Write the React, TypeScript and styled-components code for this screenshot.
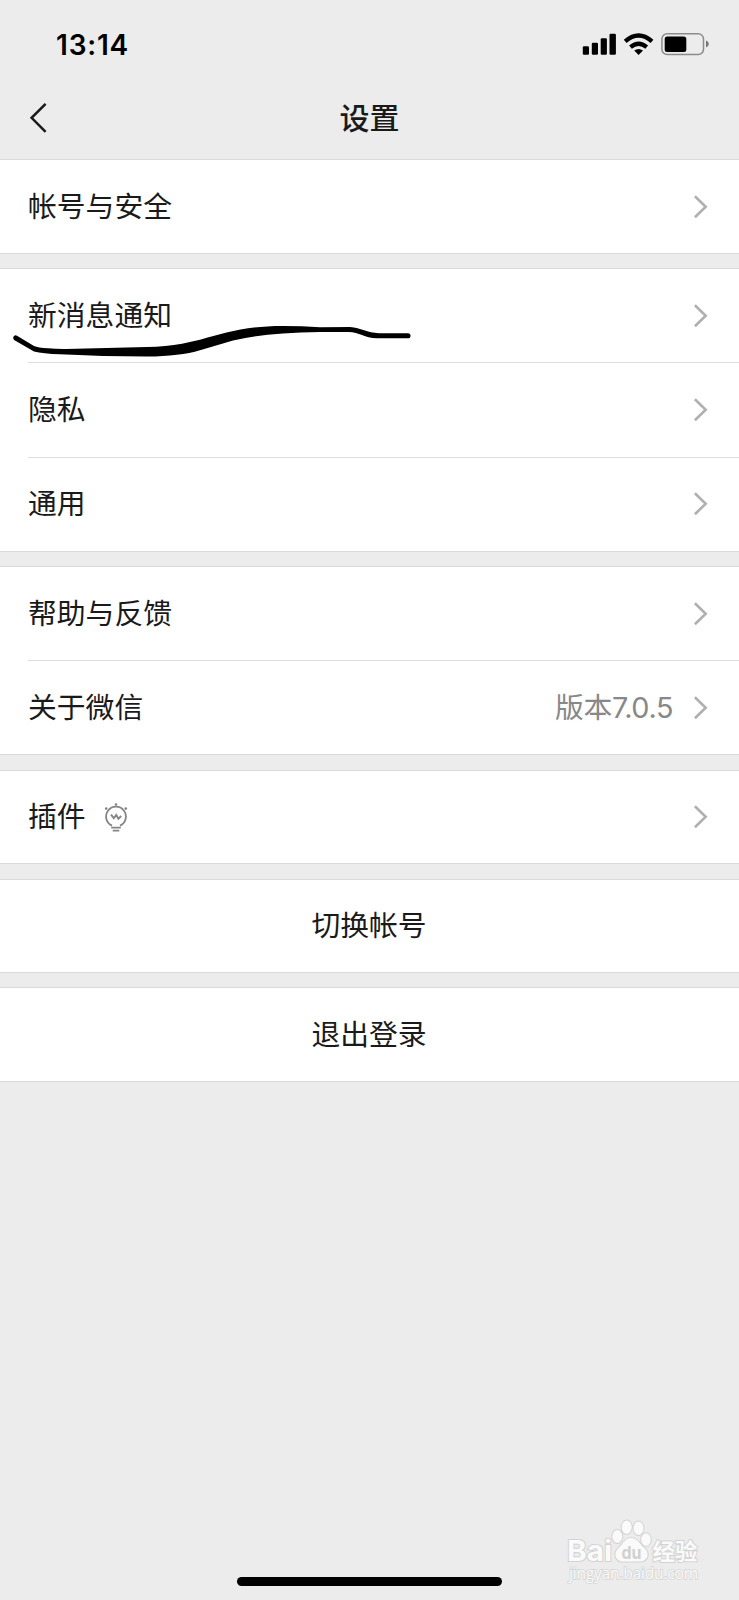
import React from 'react';
import styled, { createGlobalStyle } from 'styled-components';

const GlobalStyle = createGlobalStyle`
  * { box-sizing: border-box; }
  html, body { margin: 0; background: #ececec; }
`;

const Screen = styled.main`
  position: relative;
  width: 739px;
  height: 1600px;
  overflow: hidden;
  display: flex;
  flex-direction: column;
  background: #ececec;
  color: #1a1a1a;
  font-family: Inter, 'Noto Sans CJK SC', sans-serif;
`;

const StatusBar = styled.div`
  height: 88px;
  flex: none;
  display: flex;
  justify-content: space-between;
  padding-right: 29px;
`;

const Time = styled.span`
  padding: 28px 0 0 56px;
  font: 600 28px/34px Inter, sans-serif;
  letter-spacing: 0.8px;
  color: #000;
`;

const StatusIcons = styled.svg`
  width: 130px;
  height: 28px;
  margin-top: 30px;
`;

const NavBar = styled.header`
  height: 71px;
  flex: none;
  display: grid;
  grid-template-columns: 100px 1fr 100px;
`;

const BackIcon = styled.svg`
  width: 24px;
  height: 36px;
  margin: 12px 0 0 26px;
`;

const Title = styled.h1`
  margin: 6px 0 0;
  text-align: center;
  font: 500 30px/44px 'Noto Sans CJK SC', sans-serif;
`;

const Group = styled.section<{ $height: number; $gap: number }>`
  position: relative;
  flex: none;
  display: flex;
  flex-direction: column;
  height: ${(p) => p.$height}px;
  margin-bottom: ${(p) => p.$gap}px;
  background: #fff;
  border-top: 1px solid #dadada;
  border-bottom: 1px solid #dadada;
`;

const Row = styled.div<{ $center?: boolean }>`
  flex: 1;
  display: flex;
  align-items: center;
  justify-content: ${(p) => (p.$center ? 'center' : 'flex-start')};
  margin-left: ${(p) => (p.$center ? 0 : 28)}px;
  padding-right: ${(p) => (p.$center ? 1 : 30)}px;
  & + & { border-top: 1px solid #dedede; }
`;

const Label = styled.span`
  font-size: 28.8px;
  line-height: 42px;
  white-space: nowrap;
`;

const Value = styled.span`
  margin-left: auto;
  margin-right: 20px;
  font-size: 28.8px;
  line-height: 42px;
  letter-spacing: -0.4px;
  color: #888;
`;

const ChevronIcon = styled.svg<{ $push: boolean }>`
  width: 16px;
  height: 24px;
  flex: none;
  margin-left: ${(p) => (p.$push ? 'auto' : '0')};
`;

const BulbIcon = styled.svg`
  width: 26px;
  height: 30px;
  margin: 1px 0 0 17px;
`;

const Underline = styled.svg`
  position: absolute;
  left: 0;
  top: 51px;
  width: 420px;
  height: 40px;
`;

const HomeIndicator = styled.div`
  position: absolute;
  left: 237px;
  top: 1577px;
  width: 265px;
  height: 9px;
  border-radius: 5px;
  background: #000;
`;

const Watermark = styled.svg`
  position: absolute;
  left: 560px;
  top: 1514px;
  width: 150px;
  height: 74px;
`;

function Chevron({ push = true }: { push?: boolean }) {
  return (
    <ChevronIcon $push={push} viewBox="0 0 16 24" fill="none" stroke="#b0b0b0" strokeWidth="2.6">
      <path d="M1.9 1.2 12.7 11.7 1.9 22.2" />
    </ChevronIcon>
  );
}

function Item({ label, value, icon }: { label: string; value?: string; icon?: React.ReactNode }) {
  return (
    <Row>
      <Label>{label}</Label>
      {icon}
      {value && <Value>{value}</Value>}
      <Chevron push={!value} />
    </Row>
  );
}

function Bulb() {
  return (
    <BulbIcon viewBox="0 0 26 30" fill="none" stroke="#858585" strokeWidth="1.8">
      <path d="M9 22.6A9.9 9.9 0 1 1 17 22.6M8.2 24.6H17.8M9.7 27.6H16.3" />
      <path d="M8 11.6 10.8 15.2 13.2 12 15.4 15.8 18.2 13" strokeWidth="1.9" />
      <g fill="#858585" stroke="none">
        <circle cx="13" cy="1.5" r="1.3" />
        <circle cx="3.2" cy="5.6" r="1.3" />
        <circle cx="22.8" cy="5.6" r="1.3" />
      </g>
    </BulbIcon>
  );
}

export default function App() {
  return (
    <Screen>
      <GlobalStyle />
      <StatusBar>
        <Time>13:14</Time>
        <StatusIcons viewBox="580 30 130 28">
          <rect x="582.8" y="46.3" width="6.2" height="8.4" rx="1.2" />
          <rect x="591.8" y="42.8" width="6.2" height="11.9" rx="1.2" />
          <rect x="600.7" y="38.3" width="6.2" height="16.4" rx="1.2" />
          <rect x="609.5" y="33.8" width="6.4" height="20.9" rx="1.2" />
          <path d="M625.2 41.3Q638.6 29.6 652 41.3M630.5 47.2Q638.6 40.2 646.7 47.2" fill="none" stroke="#000" strokeWidth="4.2" />
          <path d="M634.2 50.6Q638.6 47.4 643 50.6L638.6 54.9Z" />
          <rect x="661.9" y="33.7" width="41.6" height="20.8" rx="5.3" fill="none" stroke="#8c8c8c" strokeWidth="1.5" />
          <rect x="664.7" y="36.4" width="21.6" height="15.6" rx="2.5" />
          <path d="M706 40.5Q708.8 41.4 708.8 44T706 47.5Z" fill="#777" />
        </StatusIcons>
      </StatusBar>
      <NavBar>
        <BackIcon viewBox="26 100 24 36" fill="none" stroke="#1a1a1a" strokeWidth="2.5">
          <path d="M45.6 103.8 31.6 117.8 45.6 131.8" />
        </BackIcon>
        <Title>设置</Title>
      </NavBar>
      <Group $height={95} $gap={14}>
        <Item label="帐号与安全" />
      </Group>
      <Group $height={284} $gap={14}>
        <Item label="新消息通知" />
        <Item label="隐私" />
        <Item label="通用" />
        <Underline viewBox="0 320 420 40">
          <path d="M17 335.7L34 346Q38 347.8 48 348.3Q56 349.1 66 349L147 347Q166 346.8 182 343.8L200 339.7C225 333 245 326 283 326Q302 326 320 327.2L350 327.1C361 327.8 367 333.2 379 333.2H408A2.5 2.5 0 0 1 408 338.3H377C364 338.2 359 331.7 348 332H320Q300 332.3 283 333.4Q252 335.7 233 340.6L200 350.2Q180 356.3 147 356.5Q103 356.4 60 354.2Q43 353.7 34 351.4L14.1 340Q12.3 337.8 14 336Q15.4 334.8 17 335.7Z" />
        </Underline>
      </Group>
      <Group $height={189} $gap={15}>
        <Item label="帮助与反馈" />
        <Item label="关于微信" value="版本7.0.5" />
      </Group>
      <Group $height={94} $gap={15}>
        <Item label="插件" icon={<Bulb />} />
      </Group>
      <Group $height={94} $gap={14}>
        <Row $center><Label>切换帐号</Label></Row>
      </Group>
      <Group $height={95} $gap={0}>
        <Row $center><Label>退出登录</Label></Row>
      </Group>
      <HomeIndicator />
      <Watermark viewBox="560 1514 150 74" fill="#fafafa" stroke="#d3d3d3" strokeWidth="2" paintOrder="stroke">
        <text x="567" y="1561" fontFamily="Inter, sans-serif" fontSize="29" fontWeight="700" textLength="45" lengthAdjust="spacingAndGlyphs">Bai</text>
        <ellipse cx="617.3" cy="1536.5" rx="5" ry="6.5" />
        <ellipse cx="626.7" cy="1527.3" rx="5" ry="6.7" />
        <ellipse cx="638.5" cy="1528.3" rx="5" ry="6.7" />
        <ellipse cx="646" cy="1539.5" rx="4.8" ry="6.3" />
        <path d="M631 1538C625 1538 623 1544 618.5 1548C613 1553 615 1561.5 623 1561.5H640C648 1561.5 650 1553 644.5 1548C639.5 1544 637.5 1538 631 1538Z" />
        <text x="621.5" y="1558.5" fill="#d0d0d0" stroke="none" fontFamily="Inter, sans-serif" fontSize="18" fontWeight="700" textLength="20" lengthAdjust="spacingAndGlyphs">du</text>
        <text x="652.5" y="1559.5" fontFamily="'Noto Sans CJK SC', sans-serif" fontSize="22.5" fontWeight="700">经验</text>
        <text x="569" y="1579" strokeWidth="1.4" fontFamily="'Open Sans', sans-serif" fontSize="15.5" textLength="129">jingyan.baidu.com</text>
      </Watermark>
    </Screen>
  );
}
